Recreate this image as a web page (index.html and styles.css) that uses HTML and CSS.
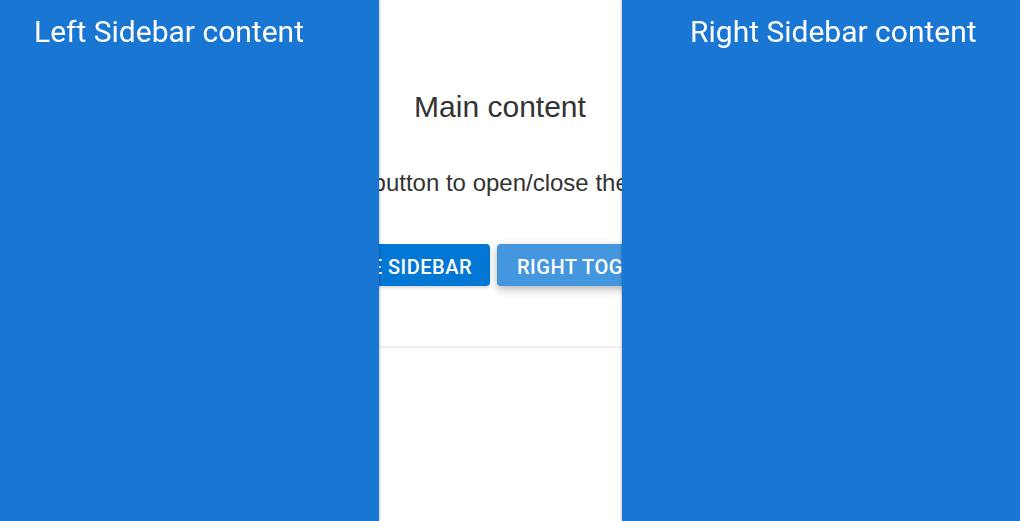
FILE: index.html
```html
<!DOCTYPE html>
<html>
<head>
<meta charset="utf-8">
<link rel="stylesheet" href="styles.css">
</head>
<body>
<main class="main">
  <h1 class="title">Main content</h1>
  <p class="lead">Click the button to open/close the sidebars</p>
  <div class="actions">
    <button class="btn btn-left">Left toggle sidebar</button>
    <button class="btn btn-right">Right toggle sidebar</button>
  </div>
  <hr class="rule">
</main>
<aside class="sidebar sidebar-left"><h2 class="side-title">Left Sidebar content</h2></aside>
<aside class="sidebar sidebar-right"><h2 class="side-title">Right Sidebar content</h2></aside>
</body>
</html>
```
FILE: styles.css
```css
html, body {
  margin: 0;
  padding: 0;
  height: 100%;
  background: #fff;
}
.main {
  padding: 89px 20px 0 0;
  text-align: center;
  font-family: "Liberation Sans", Arial, sans-serif;
  color: #333;
}
.title {
  margin: 0;
  font-size: 30px;
  font-weight: 400;
  line-height: 36px;
}
.lead {
  margin: 44px 0 0;
  font-size: 24px;
  line-height: 28px;
}
.actions {
  margin-top: 47px;
  padding-left: 4px;
  display: flex;
  justify-content: center;
  gap: 7px;
}
.btn {
  font-family: Roboto, sans-serif;
  font-weight: 500;
  font-size: 20px;
  text-transform: uppercase;
  color: #fff;
  border: none;
  border-radius: 4px;
  height: 42px;
  padding: 3px 18px 0;
  letter-spacing: 0.5px;
}
.btn-left {
  background: #0277d3;
  box-shadow: 0 2px 3px rgba(0,0,0,0.15);
}
.btn-right {
  padding: 3px 20px 0;
  background: #4496de;
  box-shadow: 0 3px 8px rgba(0,0,0,0.3);
}
.rule {
  margin: 60px 0 0;
  border: none;
  height: 2px;
  background: #eeeeee;
}
.sidebar {
  position: fixed;
  top: 0;
  bottom: 0;
  background: #1976d2;
  color: #fff;
  font-family: Roboto, sans-serif;
  box-sizing: border-box;
}
.sidebar-left {
  left: 0;
  width: 379px;
  padding-left: 34px;
  box-shadow: 1px 0 2px rgba(0,0,0,0.2);
}
.sidebar-right {
  left: 622px;
  right: 0;
  padding-left: 68px;
  box-shadow: -1px 0 2px rgba(0,0,0,0.2);
}
.side-title {
  margin: 13px 0 0;
  font-size: 30px;
  font-weight: 400;
  line-height: 38px;
}
```
